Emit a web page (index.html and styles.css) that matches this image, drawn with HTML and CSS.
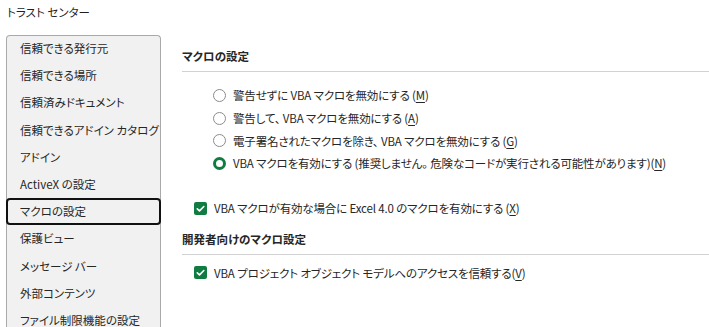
FILE: index.html
```html
<!DOCTYPE html>
<html lang="ja">
<head>
<meta charset="UTF-8" />
<meta name="viewport" content="width=device-width, initial-scale=1.0">
<title>トラスト センター</title>
<link rel="stylesheet" href="styles.css">
</head>
<body>

<div class="title">トラスト センター</div>

<div class="main">
  <ul class="sidebar">
    <li>信頼できる発行元</li>
    <li>信頼できる場所</li>
    <li>信頼済みドキュメント</li>
    <li>信頼できるアドイン カタログ</li>
    <li>アドイン</li>
    <li>ActiveX の設定</li>
    <li class="active">マクロの設定</li>
    <li>保護ビュー</li>
    <li>メッセージ バー</li>
    <li>外部コンテンツ</li>
    <li>ファイル制限機能の設定</li>
  </ul>

  <div class="content">
    <div class="section-title">マクロの設定</div>
    <div class="radios">
      <div class="row"><span class="radio"></span>警告せずに VBA マクロを無効にする (<u>M</u>)</div>
      <div class="row"><span class="radio"></span>警告して、 VBA マクロを無効にする (<u>A</u>)</div>
      <div class="row"><span class="radio"></span>電子署名されたマクロを除き、 VBA マクロを無効にする (<u>G</u>)</div>
      <div class="row"><span class="radio on"></span>VBA マクロを有効にする (推奨しません。 危険なコードが実行される可能性があります)(<u>N</u>)</div>
    </div>
    <div class="row check-row first">
      <span class="check"><svg viewBox="0 0 13 13" width="13" height="13"><path d="M3.3 6.8 L5.5 8.9 L9.8 4.5" fill="none" stroke="#fff" stroke-width="1.6" stroke-linecap="round" stroke-linejoin="round"/></svg></span>VBA マクロが有効な場合に Excel 4.0 のマクロを有効にする (<u>X</u>)
    </div>
    <div class="section-title second">開発者向けのマクロ設定</div>
    <div class="row check-row last">
      <span class="check"><svg viewBox="0 0 13 13" width="13" height="13"><path d="M3.3 6.8 L5.5 8.9 L9.8 4.5" fill="none" stroke="#fff" stroke-width="1.6" stroke-linecap="round" stroke-linejoin="round"/></svg></span>VBA プロジェクト オブジェクト モデルへのアクセスを信頼する(<u>V</u>)
    </div>
  </div>
</div>

</body>
</html>
```

FILE: styles.css
```css
body {margin:0; background:#fff; color:#262626; font-family:"Noto Sans CJK JP", "Noto Sans", sans-serif; font-size:11.5px; font-feature-settings:"palt"; overflow:hidden; height:327px;}
.title {height:24px; line-height:24px; padding-left:7px; color:#1f1f1f;}
.main {display:flex; margin-top:11px; align-items:flex-start;}
.sidebar {list-style:none; margin:0 0 0 6px; padding:0; width:153px; height:300px; background:#f1f1f1; border:1px solid #a9a9a9; border-bottom:none; border-radius:4px 4px 0 0; flex-shrink:0;}
.sidebar li {height:27.2px; line-height:24px; padding-left:13px; box-sizing:border-box; white-space:nowrap;}
.sidebar li.active {margin:-1px -1px 1px -1px; padding-left:12px; border:2px solid #111; border-radius:4px; line-height:22px;}
.content {flex:1; padding-left:21px; padding-top:11px;}
.section-title {height:20px; line-height:20px; font-weight:bold; padding-bottom:5px; border-bottom:1px solid #d2d2d2;}
.section-title.second {margin-top:10px;}
.radios {margin-top:12px; padding-left:30px;}
.row {display:flex; align-items:center; height:22.7px; white-space:nowrap; letter-spacing:-0.15px;}
.radio {width:11px; height:11px; border:1px solid #8c8c8c; border-radius:50%; margin-right:7px; box-sizing:content-box; margin-left:1px;}
.radio.on {width:7px; height:7px; border:3px solid #107c41;}
.check-row {padding-left:12px;}
.check-row.first {margin-top:22px;}
.check-row.last {margin-top:6px;}
.check {width:13px; height:13px; background:#107c41; border-radius:2px; margin-right:7px; display:flex;}
u {text-underline-offset:2px;}
```
